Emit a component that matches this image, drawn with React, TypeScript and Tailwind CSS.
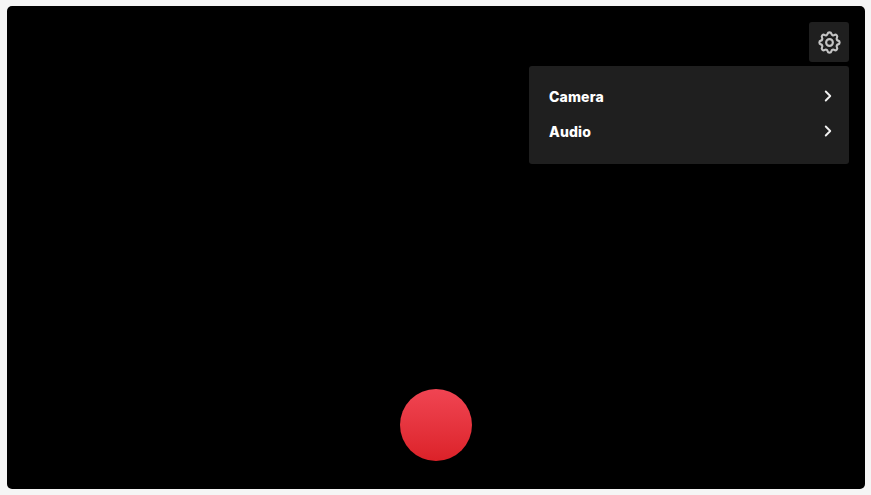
import { ChevronRight } from "lucide-react";
import { TbSettings } from "react-icons/tb";

function Row({ label }: { label: string }) {
  return (
    <div className="flex h-[35px] items-center justify-between pl-5 pr-[12px]">
      <span className="text-[14px] font-extrabold tracking-[0.15px] text-white">{label}</span>
      <ChevronRight size={18} strokeWidth={2.5} className="mb-[2px] text-[#f0f0f0]" />
    </div>
  );
}

export default function App() {
  return (
    <div className="h-[495px] w-[871px] overflow-hidden bg-[#f5f5f5] pb-[6px] pl-[7px] pr-[6px] pt-[6px] font-['Inter',sans-serif]">
      <div className="relative h-[483px] w-[858px] rounded-[5px] bg-black">
        <div className="absolute right-4 top-4 flex w-[320px] flex-col items-end gap-1">
          <button className="flex h-10 w-10 items-center justify-center rounded-[3px] bg-[#1f1f1f]">
            <TbSettings size={27} strokeWidth={1.9} className="text-[#c4c4c4]" />
          </button>
          <div className="w-full rounded-[3px] bg-[#1f1f1f] pb-[15px] pt-[13px]">
            <Row label="Camera" />
            <Row label="Audio" />
          </div>
        </div>
        <button className="absolute bottom-[28px] left-[393px] h-[72px] w-[72px] rounded-full bg-gradient-to-b from-[#f04452] to-[#dc2128]" />
      </div>
    </div>
  );
}
